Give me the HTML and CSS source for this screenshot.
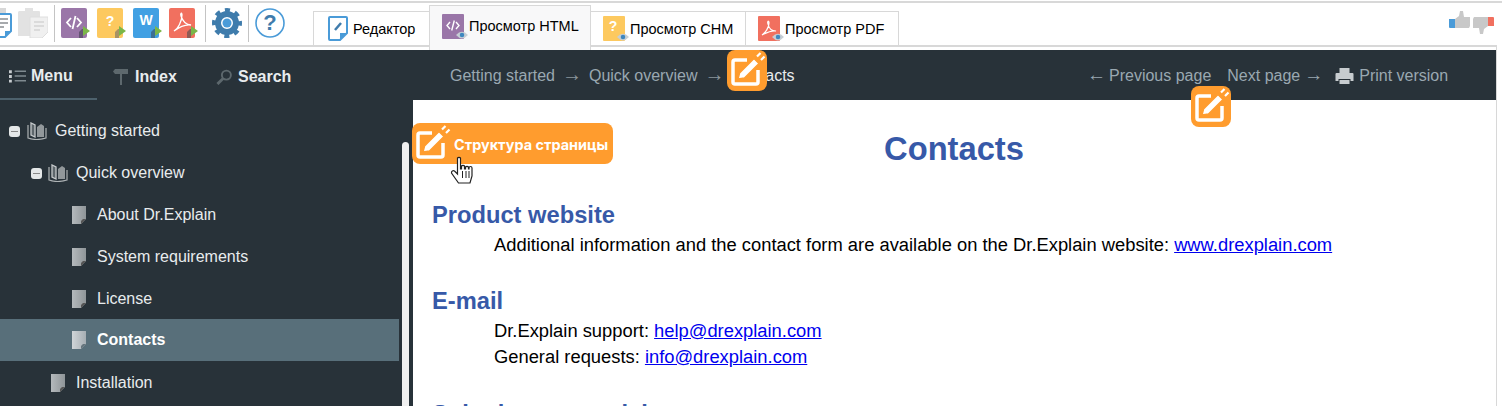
FILE: index.html
```html
<!DOCTYPE html>
<html lang="en">
<head>
<meta charset="utf-8">
<title>Contacts</title>
<link rel="stylesheet" href="styles.css">
</head>
<body>
<svg class="defs" width="0" height="0" aria-hidden="true">
  <defs>
    <linearGradient id="pg-grad" x1="0" y1="0" x2="1" y2="0"><stop offset="0" stop-color="#b4b9bc"/><stop offset="1" stop-color="#8f9598"/></linearGradient>
    <linearGradient id="pg-grad-light" x1="0" y1="0" x2="1" y2="0"><stop offset="0" stop-color="#d0d5d8"/><stop offset="1" stop-color="#a6aeb3"/></linearGradient>
  </defs>
  <symbol id="edit" viewBox="0 0 40 41">
    <path d="M20 10H8a2 2 0 0 0-2 2v20a2 2 0 0 0 2 2h21a2 2 0 0 0 2-2V20" fill="none" stroke="#fff" stroke-width="3.500"/>
    <path d="M11 29l1.500-6L27 8.500l5 5L17.500 28z" fill="#fff" stroke="#ff9c2e" stroke-width="1.500"/>
    <path d="M30 6.500l3.500-3.500M34 10l3.500-3.500" stroke="#fff" stroke-width="2.200"/>
  </symbol>
  <symbol id="page" viewBox="0 0 14 18">
    <path d="M0 0h14v13l-5 5H0z" fill="url(#pg-grad)"/>
    <path d="M9 18v-3l2-2h3z" fill="#555"/>
  </symbol>
  <symbol id="page-light" viewBox="0 0 14 18">
    <path d="M0 0h14v13l-5 5H0z" fill="url(#pg-grad-light)"/>
    <path d="M9 18v-3l2-2h3z" fill="#66757d"/>
  </symbol>
  <symbol id="book" viewBox="0 0 20 18">
    <path d="M1 3v13q8 3 18 0V6" fill="none" stroke="#aeb3b5" stroke-width="1.200"/>
    <path d="M4 1v12l4 2V3z" fill="#5d666b" stroke="#c4c8ca" stroke-width="1.300"/>
    <path d="M10 15V5l4-3 3 2v11z" fill="#92989b"/>
  </symbol>
  <symbol id="eye" viewBox="0 0 16 10">
    <path d="M0 5q8-9 16 0-8 9-16 0z" fill="#c6ced4"/>
    <circle cx="8" cy="5" r="3" fill="#3f87bf"/>
  </symbol>
</svg>

<header class="toolbar">
  <div class="tools">
    <div class="group">
      <svg class="tool-sm" viewBox="0 0 12 30"><path d="M0 0h6v5H0z" fill="#d8d8d8"/><path d="M-4 6h14a1 1 0 0 1 1 1v16l-6 6H-4" fill="#fff" stroke="#4a9bd8" stroke-width="2"/><path d="M5 29v-6h6z" fill="#4a9bd8"/><path d="M0 11h8M0 15h8M0 19h4" stroke="#8a8f93" stroke-width="1.600"/></svg>
      <svg class="tool" viewBox="0 0 30 30"><path d="M1 3h6V0h8v3h6a1 1 0 0 1 1 1v24H0V4z" fill="#e2e2e2"/><path d="M12 9h18v15l-6 6H12z" fill="#f0f0f0" stroke="#dedede"/><path d="M16 14h10M16 18h10M16 22h6" stroke="#d4d4d4" stroke-width="1.500"/></svg>
    </div>
    <div class="group">
      <svg class="tool" viewBox="0 0 30 30"><rect width="26" height="30" rx="2" fill="#9a76a8"/><path d="M10 10l-4 4.500 4 4.500M16 10l4 4.500-4 4.500M14.500 8l-3 13" fill="none" stroke="#fff" stroke-width="1.800"/><path d="M18 30v-6l3-3h1v9z" fill="#655574"/><path d="M22 18l7 5-7 5z" fill="#7ab648"/></svg>
      <svg class="tool" viewBox="0 0 30 30"><rect width="26" height="30" rx="2" fill="#fdc95f"/><text x="13" y="18" class="glyph big">?</text><path d="M18 30v-6l3-3h1v9z" fill="#a89264"/><path d="M22 18l7 5-7 5z" fill="#7ab648"/></svg>
      <svg class="tool" viewBox="0 0 30 30"><rect width="26" height="30" rx="2" fill="#41a0e3"/><text x="13" y="17" class="glyph big">W</text><path d="M18 30v-6l3-3h1v9z" fill="#3c6f95"/><path d="M22 18l7 5-7 5z" fill="#7ab648"/></svg>
      <svg class="tool" viewBox="0 0 30 30"><rect width="26" height="30" rx="2" fill="#f1705f"/><path d="M5 23c4-2 8-10 8-16 0-3-2-2-1 1 2 6 6 9 10 9-6-1-13 3-17 6z" fill="none" stroke="#fff" stroke-width="1.300"/><path d="M18 30v-6l3-3h1v9z" fill="#8f5b55"/><path d="M22 18l7 5-7 5z" fill="#7ab648"/></svg>
    </div>
    <div class="group">
      <svg class="tool" viewBox="0 0 30 30"><circle cx="15" cy="15" r="9" fill="none" stroke="#3f7cac" stroke-width="6"/><circle cx="15" cy="15" r="13" fill="none" stroke="#3f7cac" stroke-width="4" stroke-dasharray="5.100 5.110" stroke-dashoffset="2.500"/><circle cx="15" cy="15" r="4.500" fill="#4a9bd8"/></svg>
    </div>
    <div class="group last">
      <svg class="tool" viewBox="0 0 30 30"><circle cx="15" cy="15" r="14" fill="#fff" stroke="#4a9bd8" stroke-width="1.600"/><text x="15" y="22" class="help">?</text></svg>
    </div>
  </div>
  <nav class="tabs">
    <div class="tab edit-tab">
      <svg class="tab-icon" viewBox="0 0 20 25"><path d="M2 1h16a1 1 0 0 1 1 1v15l-7 7H2a1 1 0 0 1-1-1V2a1 1 0 0 1 1-1z" fill="#fff" stroke="#4a9bd8" stroke-width="2"/><path d="M12 24v-7h7z" fill="#4a9bd8"/><path d="M7 14l6-7" stroke="#3f7cac" stroke-width="2.500"/></svg>
      <span>Редактор</span>
    </div>
    <div class="tab active">
      <span class="doc-icon"><svg viewBox="0 0 22 25"><rect width="22" height="25" rx="1" fill="#9a76a8"/><path d="M8 8l-3 3.500 3 3.500M14 8l3 3.500-3 3.500M12.300 6.500l-2.600 10" fill="none" stroke="#fff" stroke-width="1.400"/></svg><svg class="eye"><use href="#eye"/></svg></span>
      <span>Просмотр HTML</span>
    </div>
    <div class="tab chm">
      <span class="doc-icon"><svg viewBox="0 0 22 25"><rect width="22" height="25" rx="1" fill="#fdc95f"/><text x="10" y="15" class="glyph big">?</text></svg><svg class="eye"><use href="#eye"/></svg></span>
      <span>Просмотр CHM</span>
    </div>
    <div class="tab pdf">
      <span class="doc-icon"><svg viewBox="0 0 22 25"><rect width="22" height="25" rx="1" fill="#f1705f"/><path d="M4 19c3-2 7-7 7-12 0-3-2-2-1 1 1 5 4 7 8 7-5-1-10 2-14 4z" fill="none" stroke="#fff" stroke-width="1.200"/></svg><svg class="eye"><use href="#eye"/></svg></span>
      <span>Просмотр PDF</span>
    </div>
    <div class="tab-rest"></div>
  </nav>
  <div class="votes">
    <svg viewBox="0 0 21 17"><path d="M0 8h6v9H1a1 1 0 0 1-1-1z" fill="#4a9bd8"/><path d="M6 8l4-3 1-5h3l1 6h6v9l-1 2H6z" fill="#c8c8c8"/></svg>
    <svg viewBox="0 0 21 17" class="down"><path d="M0 8h6v9H1a1 1 0 0 1-1-1z" fill="#f1705f"/><path d="M6 8l4-3 1-5h3l1 6h6v9l-1 2H6z" fill="#c8c8c8"/></svg>
  </div>
</header>

<div class="shell">
  <div class="topbar">
    <div class="side-tabs">
      <a class="side-tab current">
        <svg class="st-icon" viewBox="0 0 18 14"><path d="M0 1h3v3H0zM0 6h3v3H0zM0 11h3v3H0z" fill="#c7cccf"/><path d="M6 2h12M6 7h12M6 12h12" stroke="#7f8a90" stroke-width="1.600"/></svg>Menu</a>
      <a class="side-tab index">
        <svg class="st-icon" viewBox="0 0 17 16"><path d="M7 5h2v11H7z" fill="#5d686d"/><path d="M2 0h13v5H2L0 2.500z" fill="#5d686d"/></svg>Index</a>
      <a class="side-tab search">
        <svg class="st-icon" viewBox="0 0 17 17"><circle cx="10.500" cy="6.500" r="4.800" fill="none" stroke="#5d686d" stroke-width="2"/><path d="M7 10l-6 6" stroke="#5d686d" stroke-width="3"/></svg>Search</a>
    </div>
    <div class="crumbs">
      <span>Getting started</span><span class="arrow">→</span><span>Quick overview</span><span class="arrow">→</span><span class="here">Contacts</span>
    </div>
    <div class="pager">
      <span class="long-arrow back">←</span><span>Previous page</span>
      <span class="next">Next page</span><span class="long-arrow fwd">→</span>
      <span class="print"><svg viewBox="0 0 18 16"><path d="M4 0h10v5H4z" fill="#c7cccf"/><path d="M1 5h16a1 1 0 0 1 1 1v7h-3v-2H3v2H0V6a1 1 0 0 1 1-1z" fill="#c7cccf"/><path d="M4 12h10v4H4z" fill="#c7cccf"/></svg>Print version</span>
    </div>
    <svg class="badge-icon crumb-badge"><use href="#edit"/></svg>
    <svg class="badge-icon pager-badge"><use href="#edit"/></svg>
  </div>
  <div class="body">
    <aside class="menu">
      <ul class="tree">
        <li class="node l0"><i class="minus"></i><svg class="bk"><use href="#book"/></svg>Getting started</li>
        <li class="node l1"><i class="minus"></i><svg class="bk"><use href="#book"/></svg>Quick overview</li>
        <li class="node l2"><svg class="pg"><use href="#page"/></svg>About Dr.Explain</li>
        <li class="node l2"><svg class="pg"><use href="#page"/></svg>System requirements</li>
        <li class="node l2"><svg class="pg"><use href="#page"/></svg>License</li>
        <li class="node l2 selected"><svg class="pg"><use href="#page-light"/></svg>Contacts</li>
        <li class="node l1b"><svg class="pg"><use href="#page"/></svg>Installation</li>
      </ul>
      <div class="scrollbar"></div>
    </aside>
    <main class="content">
      <div class="structure">
        <svg class="badge-glyph"><use href="#edit"/></svg>
        <span>Структура страницы</span>
        <svg class="cursor" viewBox="0 0 22 30"><path d="M7 2a2 2 0 0 1 3 0v11h1v-3a2 2 0 0 1 3 0v3h1v-2a2 2 0 0 1 3 0v2h.500v-1a1.500 1.500 0 0 1 3 0v8l-2 7H8L1 17a2 2 0 0 1 3-2l3 3z" fill="#fff" stroke="#222" stroke-width="1.200"/><path d="M12 15v7M15.500 15v7M18.500 15v7" stroke="#222"/></svg>
      </div>
      <h1>Contacts</h1>
      <h2 class="first">Product website</h2>
      <p>Additional information and the contact form are available on the Dr.Explain website: <a href="#">www.drexplain.com</a></p>
      <h2>E-mail</h2>
      <p class="last-p">Dr.Explain support: <a href="#">help@drexplain.com</a><br>General requests: <a href="#">info@drexplain.com</a></p>
      <h2>Submit support ticket</h2>
    </main>
  </div>
</div>
</body>
</html>
```
FILE: styles.css
```css
html, body { margin: 0; height: 406px; overflow: hidden; background: #fff; }
body { font-family: "Liberation Sans", Arial, sans-serif; font-size: 16px; color: #000; }
.defs { display: block; height: 0; }

.toolbar { height: 49px; margin-top: 1px; box-sizing: border-box; border-top: 2px solid #d8d8d8; padding-bottom: 3px; display: flex; position: relative; }
.tools { display: flex; align-items: flex-start; height: 44px; border-bottom: 2px solid #d8d8d8; box-sizing: border-box; width: 313px; flex: none; padding-top: 2px; }
.group { display: flex; align-items: flex-start; gap: 6px; height: 37px; padding: 3px 6px 0 0; border-right: 1px solid #c4c4c4; margin-right: 6px; box-sizing: border-box; }
.group.last { border: 0; }
.tool { width: 30px; height: 30px; display: block; }
.tool-sm { width: 12px; height: 30px; display: block; }
.glyph { font: bold 11px "Liberation Sans", sans-serif; fill: #fff; text-anchor: middle; }
.glyph.big { font-size: 14px; }
.help { font: bold 22px "Liberation Sans", sans-serif; fill: #3f7cac; text-anchor: middle; }

.tabs { display: flex; align-items: flex-end; flex: 1; margin-right: 5px; height: 44px; }
.tab { height: 36px; box-sizing: border-box; border: 1px solid #d8d8d8; border-bottom-width: 2px; display: flex; align-items: center; gap: 2px; padding: 0 0 0 12px; font-size: 14.500px; margin-left: -1px; white-space: nowrap; flex: none; }
.edit-tab { width: 117px; margin-left: 0; padding-left: 14px; gap: 5px; }
.tab.active { height: 45px; width: 162px; background: #f8f8f9; border-bottom: 0; padding: 0 0 4px 12px; margin-bottom: -3px; }
.tab.chm { width: 155px; margin-left: 0; padding-left: 12px; border-left: 0; }
.tab.pdf { width: 154px; padding-left: 12px; }
.tab-icon { width: 20px; height: 25px; flex: none; }
.doc-icon { position: relative; width: 25px; height: 25px; flex: none; display: block; }
.doc-icon > svg:first-child { width: 22px; height: 25px; display: block; }
.eye { position: absolute; right: -1px; bottom: 0; width: 12px; height: 8px; }
.tab-rest { flex: 1; height: 0; border-bottom: 2px solid #d8d8d8; }
.votes { position: absolute; right: 8px; top: 8px; display: flex; gap: 3px; align-items: flex-start; }
.votes svg { width: 21px; height: 17px; display: block; }
.votes .down { transform: rotate(180deg); margin-top: 6px; }

.shell { position: relative; margin-right: 5px; border-right: 1px solid #d8d8d8; }
.shell::before { content: ""; position: absolute; top: -5px; right: -1px; width: 1px; height: 5px; background: #d8d8d8; }
.topbar { height: 50px; box-sizing: border-box; padding-top: 2px; background: #283239; display: flex; align-items: center; color: #9aa8b1; font-size: 16px; position: relative; }
.side-tabs { width: 412px; flex: none; display: flex; align-items: flex-start; height: 48px; margin-top: -2px; font-weight: bold; color: #e8ecee; }
.side-tab { display: flex; align-items: center; height: 48px; padding: 4px 0 0 9px; gap: 5px; box-sizing: border-box; }
.side-tab.current { border-bottom: 2px solid #4d616c; height: 49px; width: 97px; padding-top: 3px; }
.side-tab.index { padding-left: 16px; width: 119px; }
.side-tab.search { padding-left: 0; }
.st-icon { width: 17px; height: 16px; flex: none; }
.crumbs { display: flex; align-items: center; width: 675px; flex: none; padding-left: 38px; box-sizing: border-box; white-space: nowrap; }
.arrow { margin: 0 7px 4px; font-size: 20px; line-height: 1; color: #8b969c; }
.here { color: #e8ecee; }
.pager { display: flex; align-items: center; white-space: nowrap; }
.long-arrow { font-size: 19px; line-height: 1; margin-bottom: 4px; }
.back { margin-right: 3px; }
.fwd { margin-left: 4px; }
.next { margin-left: 16px; }
.print { display: flex; align-items: center; margin-left: 12px; gap: 5px; }
.print svg { width: 19px; height: 16px; }
.badge-icon { position: absolute; width: 40px; height: 41px; background: #ff9c2e; border-radius: 8px; z-index: 3; }
.crumb-badge { left: 727px; top: 0; }
.pager-badge { left: 1191px; top: 36px; }

.body { display: flex; height: 306px; overflow: hidden; }
.menu { width: 413px; flex: none; background: #283239; position: relative; color: #e8ecee; font-size: 16px; }
.tree { list-style: none; margin: 0; padding: 9px 0 0; width: 399px; }
.node { height: 42px; display: flex; align-items: center; box-sizing: border-box; padding-top: 2px; }
.l0 { padding-left: 9px; }
.l1 { padding-left: 31px; }
.l1 .minus { margin-right: 6px; }
.l2 { padding-left: 72px; }
.l1b { padding-left: 51px; }
.selected { background: #586f7a; font-weight: bold; color: #fff; padding-top: 0; }
.minus { width: 11px; height: 11px; border-radius: 3px; background: #e4e7e8; position: relative; margin-right: 7px; flex: none; }
.minus::after { content: ""; position: absolute; left: 2px; right: 2px; top: 5px; height: 1px; background: #888; }
.bk { width: 20px; height: 18px; margin-right: 8px; flex: none; }
.pg { width: 14px; height: 18px; margin-right: 11px; flex: none; }
.scrollbar { position: absolute; left: 402px; top: 42px; width: 7px; height: 270px; background: #f0f0f0; border-radius: 4px 4px 0 0; }

.content { flex: 1; position: relative; padding: 0 0 0 19px; }
.structure { position: absolute; left: -1px; top: 23px; width: 201px; height: 41px; box-sizing: border-box; background: #ff9c2e; border-radius: 8px; display: flex; align-items: center; font: bold 14.450px "Inter", "Liberation Sans", sans-serif; color: #fff; z-index: 2; white-space: nowrap; }
.structure span { margin: 2px 0 0 2px; }
.badge-glyph { width: 40px; height: 41px; flex: none; }
.cursor { position: absolute; left: 38px; top: 33px; width: 23px; height: 30px; }
h1 { margin: 30px 0 0; padding-right: 20px; text-align: center; font-size: 32.700px; line-height: 38px; color: #3759a8; }
h2 { margin: 26px 0 0; font-size: 23.700px; line-height: 28px; color: #3759a8; }
h2.first { margin-top: 33px; }
p { margin: 3px 0 29px 62px; font-size: 18.350px; line-height: 26px; }
.last-p { margin-bottom: 30px; }
a[href] { color: #0000ee; text-decoration: underline; }
```
